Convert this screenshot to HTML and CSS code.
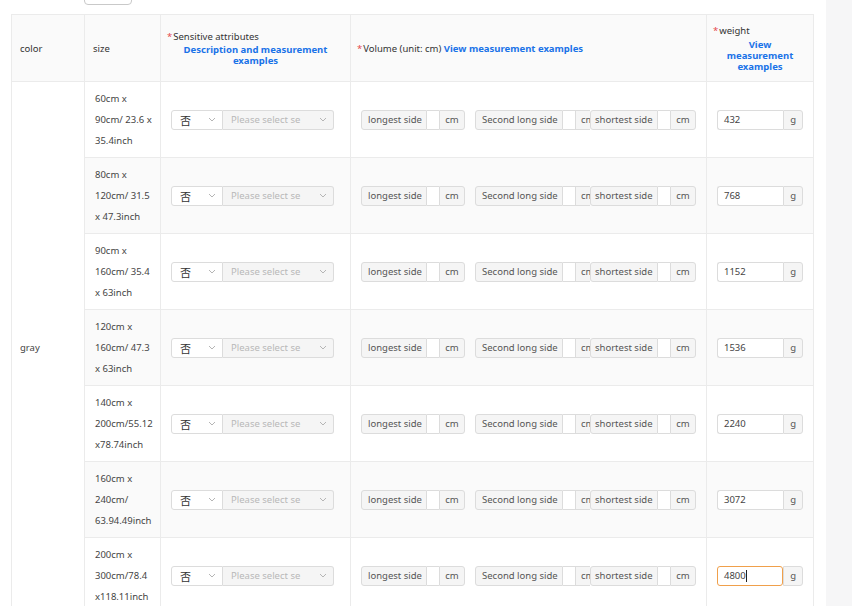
FILE: index.html
```html
<!DOCTYPE html>
<html lang="en">
<head>
    <meta charset="UTF-8">
    <meta name="viewport" content="width=device-width, initial-scale=1.0">
    <title>SKU attributes</title>
    <link rel="stylesheet" href="styles.css">
</head>
<body>
    <div class="page">
        <div class="content">
            <div class="toolbar"><button class="toolbar-btn"></button></div>

            <table class="sku-table">
                <colgroup>
                    <col class="col-color">
                    <col class="col-size">
                    <col class="col-sens">
                    <col class="col-volume">
                    <col class="col-weight">
                </colgroup>
                <thead>
                    <tr>
                        <th class="th-plain">color</th>
                        <th class="th-plain">size</th>
                        <th>
                            <div><span class="req">*</span>Sensitive attributes</div>
                            <a class="link link-center">Description and measurement examples</a>
                        </th>
                        <th><span class="req">*</span>Volume (unit: cm) <a class="link">View measurement examples</a></th>
                        <th class="th-weight">
                            <div><span class="req">*</span>weight</div>
                            <a class="link link-narrow">View measurement examples</a>
                        </th>
                    </tr>
                </thead>
                <tbody>
                    <tr>
                        <td class="cell-color" rowspan="7">gray</td>
                        <td class="cell-size">60cm x 90cm/ 23.6 x 35.4inch</td>
                        <td>
                            <div class="select-group">
                                <div class="select select-yes"><span class="cjk">否</span><svg class="chev" width="8" height="5" viewBox="0 0 8 5"><path d="M1 1l3 3 3-3" fill="none" stroke="#b5b5b5"/></svg></div>
                                <div class="select select-off"><span>Please select se</span><svg class="chev" width="8" height="5" viewBox="0 0 8 5"><path d="M1 1l3 3 3-3" fill="none" stroke="#b5b5b5"/></svg></div>
                            </div>
                        </td>
                        <td>
                            <div class="dims">
                                <div class="dim"><span class="addon lbl-1">longest side</span><span class="box"></span><span class="addon unit">cm</span></div>
                                <div class="dim dim-2"><span class="addon lbl-2">Second long side</span><span class="box"></span><span class="addon unit-cut">cm</span></div>
                                <div class="dim"><span class="addon lbl-3">shortest side</span><span class="box"></span><span class="addon unit">cm</span></div>
                            </div>
                        </td>
                        <td><div class="weight"><span class="w-input">432</span><span class="addon w-unit">g</span></div></td>
                    </tr>
                    <tr>
                        <td class="cell-size">80cm x 120cm/ 31.5 x 47.3inch</td>
                        <td>
                            <div class="select-group">
                                <div class="select select-yes"><span class="cjk">否</span><svg class="chev" width="8" height="5" viewBox="0 0 8 5"><path d="M1 1l3 3 3-3" fill="none" stroke="#b5b5b5"/></svg></div>
                                <div class="select select-off"><span>Please select se</span><svg class="chev" width="8" height="5" viewBox="0 0 8 5"><path d="M1 1l3 3 3-3" fill="none" stroke="#b5b5b5"/></svg></div>
                            </div>
                        </td>
                        <td>
                            <div class="dims">
                                <div class="dim"><span class="addon lbl-1">longest side</span><span class="box"></span><span class="addon unit">cm</span></div>
                                <div class="dim dim-2"><span class="addon lbl-2">Second long side</span><span class="box"></span><span class="addon unit-cut">cm</span></div>
                                <div class="dim"><span class="addon lbl-3">shortest side</span><span class="box"></span><span class="addon unit">cm</span></div>
                            </div>
                        </td>
                        <td><div class="weight"><span class="w-input">768</span><span class="addon w-unit">g</span></div></td>
                    </tr>
                    <tr>
                        <td class="cell-size">90cm x 160cm/ 35.4 x 63inch</td>
                        <td>
                            <div class="select-group">
                                <div class="select select-yes"><span class="cjk">否</span><svg class="chev" width="8" height="5" viewBox="0 0 8 5"><path d="M1 1l3 3 3-3" fill="none" stroke="#b5b5b5"/></svg></div>
                                <div class="select select-off"><span>Please select se</span><svg class="chev" width="8" height="5" viewBox="0 0 8 5"><path d="M1 1l3 3 3-3" fill="none" stroke="#b5b5b5"/></svg></div>
                            </div>
                        </td>
                        <td>
                            <div class="dims">
                                <div class="dim"><span class="addon lbl-1">longest side</span><span class="box"></span><span class="addon unit">cm</span></div>
                                <div class="dim dim-2"><span class="addon lbl-2">Second long side</span><span class="box"></span><span class="addon unit-cut">cm</span></div>
                                <div class="dim"><span class="addon lbl-3">shortest side</span><span class="box"></span><span class="addon unit">cm</span></div>
                            </div>
                        </td>
                        <td><div class="weight"><span class="w-input">1152</span><span class="addon w-unit">g</span></div></td>
                    </tr>
                    <tr>
                        <td class="cell-size">120cm x 160cm/ 47.3 x 63inch</td>
                        <td>
                            <div class="select-group">
                                <div class="select select-yes"><span class="cjk">否</span><svg class="chev" width="8" height="5" viewBox="0 0 8 5"><path d="M1 1l3 3 3-3" fill="none" stroke="#b5b5b5"/></svg></div>
                                <div class="select select-off"><span>Please select se</span><svg class="chev" width="8" height="5" viewBox="0 0 8 5"><path d="M1 1l3 3 3-3" fill="none" stroke="#b5b5b5"/></svg></div>
                            </div>
                        </td>
                        <td>
                            <div class="dims">
                                <div class="dim"><span class="addon lbl-1">longest side</span><span class="box"></span><span class="addon unit">cm</span></div>
                                <div class="dim dim-2"><span class="addon lbl-2">Second long side</span><span class="box"></span><span class="addon unit-cut">cm</span></div>
                                <div class="dim"><span class="addon lbl-3">shortest side</span><span class="box"></span><span class="addon unit">cm</span></div>
                            </div>
                        </td>
                        <td><div class="weight"><span class="w-input">1536</span><span class="addon w-unit">g</span></div></td>
                    </tr>
                    <tr>
                        <td class="cell-size">140cm x 200cm/55.12 x78.74inch</td>
                        <td>
                            <div class="select-group">
                                <div class="select select-yes"><span class="cjk">否</span><svg class="chev" width="8" height="5" viewBox="0 0 8 5"><path d="M1 1l3 3 3-3" fill="none" stroke="#b5b5b5"/></svg></div>
                                <div class="select select-off"><span>Please select se</span><svg class="chev" width="8" height="5" viewBox="0 0 8 5"><path d="M1 1l3 3 3-3" fill="none" stroke="#b5b5b5"/></svg></div>
                            </div>
                        </td>
                        <td>
                            <div class="dims">
                                <div class="dim"><span class="addon lbl-1">longest side</span><span class="box"></span><span class="addon unit">cm</span></div>
                                <div class="dim dim-2"><span class="addon lbl-2">Second long side</span><span class="box"></span><span class="addon unit-cut">cm</span></div>
                                <div class="dim"><span class="addon lbl-3">shortest side</span><span class="box"></span><span class="addon unit">cm</span></div>
                            </div>
                        </td>
                        <td><div class="weight"><span class="w-input">2240</span><span class="addon w-unit">g</span></div></td>
                    </tr>
                    <tr>
                        <td class="cell-size">160cm x 240cm/ 63.94.49inch</td>
                        <td>
                            <div class="select-group">
                                <div class="select select-yes"><span class="cjk">否</span><svg class="chev" width="8" height="5" viewBox="0 0 8 5"><path d="M1 1l3 3 3-3" fill="none" stroke="#b5b5b5"/></svg></div>
                                <div class="select select-off"><span>Please select se</span><svg class="chev" width="8" height="5" viewBox="0 0 8 5"><path d="M1 1l3 3 3-3" fill="none" stroke="#b5b5b5"/></svg></div>
                            </div>
                        </td>
                        <td>
                            <div class="dims">
                                <div class="dim"><span class="addon lbl-1">longest side</span><span class="box"></span><span class="addon unit">cm</span></div>
                                <div class="dim dim-2"><span class="addon lbl-2">Second long side</span><span class="box"></span><span class="addon unit-cut">cm</span></div>
                                <div class="dim"><span class="addon lbl-3">shortest side</span><span class="box"></span><span class="addon unit">cm</span></div>
                            </div>
                        </td>
                        <td><div class="weight"><span class="w-input">3072</span><span class="addon w-unit">g</span></div></td>
                    </tr>
                    <tr>
                        <td class="cell-size">200cm x 300cm/78.4 x118.11inch</td>
                        <td>
                            <div class="select-group">
                                <div class="select select-yes"><span class="cjk">否</span><svg class="chev" width="8" height="5" viewBox="0 0 8 5"><path d="M1 1l3 3 3-3" fill="none" stroke="#b5b5b5"/></svg></div>
                                <div class="select select-off"><span>Please select se</span><svg class="chev" width="8" height="5" viewBox="0 0 8 5"><path d="M1 1l3 3 3-3" fill="none" stroke="#b5b5b5"/></svg></div>
                            </div>
                        </td>
                        <td>
                            <div class="dims">
                                <div class="dim"><span class="addon lbl-1">longest side</span><span class="box"></span><span class="addon unit">cm</span></div>
                                <div class="dim dim-2"><span class="addon lbl-2">Second long side</span><span class="box"></span><span class="addon unit-cut">cm</span></div>
                                <div class="dim"><span class="addon lbl-3">shortest side</span><span class="box"></span><span class="addon unit">cm</span></div>
                            </div>
                        </td>
                        <td><div class="weight"><span class="w-input w-focus">4800<span class="caret"></span></span><span class="addon w-unit">g</span></div></td>
                    </tr>
                </tbody>
            </table>
        </div>
        <div class="rail"></div>
    </div>
</body>
</html>
```

FILE: styles.css
```css
body {
    margin: 0;
    font-family: "Noto Sans", "Noto Sans CJK SC", sans-serif;
    font-size: 9.5px;
    color: #333;
    background: #fff;
    overflow: hidden;
}

.page {
    display: flex;
    height: 606px;
}

.content {
    width: 826px;
    padding-left: 11px;
    box-sizing: border-box;
}

.rail {
    flex: 1;
    background: #f6f6f7;
}

.toolbar {
    height: 5px;
    overflow: hidden;
    display: flex;
    align-items: flex-end;
    margin-bottom: 9px;
}

.toolbar-btn {
    margin-left: 73px;
    width: 48px;
    height: 22px;
    border: 1px solid #c9c9c9;
    border-radius: 4px;
    background: #fff;
}

.sku-table {
    width: 802px;
    border-collapse: collapse;
    table-layout: fixed;
}

.col-color { width: 73px; }
.col-size { width: 76px; }
.col-sens { width: 190px; }
.col-volume { width: 356px; }
.col-weight { width: 107px; }

.sku-table th,
.sku-table td {
    border: 1px solid #ebebeb;
}

.sku-table th {
    height: 66px;
    padding: 0 6px;
    background: #fafafa;
    font-weight: normal;
    text-align: left;
    vertical-align: middle;
    line-height: 11px;
    color: #333;
}

.sku-table th.th-plain {
    padding-left: 8px;
}

.th-weight {
    padding-left: 5px;
}

.req {
    color: #e5484d;
    margin-right: 1px;
}

.link {
    color: #1a73e8;
    font-weight: bold;
}

.link-center {
    display: block;
    text-align: center;
    margin-top: 2px;
}

.link-narrow {
    display: block;
    width: 72px;
    margin: 3px auto 0;
    text-align: center;
}

.sku-table td {
    height: 75px;
    padding: 0 10px;
    vertical-align: middle;
}

.sku-table tbody tr:nth-child(even) td {
    background: #fafafa;
}

.sku-table td.cell-color {
    background: #fff;
    padding-left: 8px;
    color: #444;
}

.sku-table td.cell-size {
    padding-right: 6px;
    line-height: 21px;
    color: #444;
}

.select-group {
    display: flex;
    height: 20px;
}

.select {
    box-sizing: border-box;
    height: 20px;
    border: 1px solid #dcdcdc;
    display: flex;
    align-items: center;
    justify-content: space-between;
    padding: 0 6px 0 8px;
}

.select-yes {
    width: 52px;
    background: #fff;
    border-radius: 3px 0 0 3px;
}

.select-off {
    width: 111px;
    background: #f5f5f5;
    border-left: none;
    border-radius: 0 3px 3px 0;
    color: #b8b8b8;
}

.cjk {
    font-family: "Noto Sans CJK SC", sans-serif;
    font-size: 11px;
    color: #333;
}

.dims {
    display: flex;
}

.dim {
    display: flex;
    height: 20px;
}

.dim-2 {
    margin-left: 10px;
}

.addon {
    box-sizing: border-box;
    height: 20px;
    border: 1px solid #dcdcdc;
    background: #f5f5f5;
    color: #555;
    display: flex;
    align-items: center;
    white-space: nowrap;
    overflow: hidden;
}

.lbl-1 { width: 66px; padding-left: 6px; border-radius: 3px 0 0 3px; }
.lbl-2 { width: 88px; padding-left: 6px; border-radius: 3px 0 0 3px; }
.lbl-3 { width: 68px; padding-left: 4px; border-radius: 3px 0 0 3px; }

.box {
    width: 12px;
    height: 20px;
    box-sizing: border-box;
    border-top: 1px solid #dcdcdc;
    border-bottom: 1px solid #dcdcdc;
    background: #fff;
}

.unit {
    width: 26px;
    justify-content: center;
    border-radius: 0 3px 3px 0;
}

.unit-cut {
    width: 15px;
    padding-left: 5px;
    border-right: none;
}

.weight {
    display: flex;
    height: 20px;
}

.w-input {
    box-sizing: border-box;
    width: 68px;
    height: 20px;
    border: 1px solid #dcdcdc;
    border-right: none;
    border-radius: 3px 0 0 3px;
    background: #fff;
    padding-left: 6px;
    display: flex;
    align-items: center;
    color: #444;
}

.w-focus {
    border: 1px solid #f0a04b;
    border-radius: 3px;
}

.caret {
    width: 1px;
    height: 12px;
    background: #222;
}

.w-unit {
    width: 20px;
    justify-content: center;
    border-radius: 0 3px 3px 0;
}
```
